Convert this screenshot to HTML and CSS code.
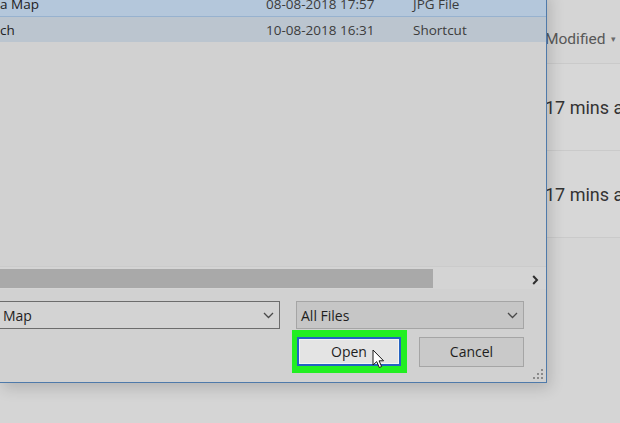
FILE: index.html
```html
<!DOCTYPE html>
<html>
<head>
<meta charset="utf-8">
<link rel="stylesheet" href="styles.css">
</head>
<body>
<div class="screen">
  <div class="explorer">
    <div class="col-header">Modified <span class="caret">▾</span></div>
    <div class="drive-row">17 mins ago</div>
    <div class="drive-row">17 mins ago</div>
  </div>

  <div class="dialog">
    <div class="filelist">
      <div class="file sel">
        <span class="c-name">a Map</span>
        <span class="c-date">08-08-2018 17:57</span>
        <span class="c-type">JPG File</span>
      </div>
      <div class="file hover">
        <span class="c-name">ch</span>
        <span class="c-date">10-08-2018 16:31</span>
        <span class="c-type">Shortcut</span>
      </div>
    </div>
    <div class="hscroll">
      <div class="thumb"></div>
      <svg class="scroll-arrow" width="7" height="10" viewBox="0 0 7 10"><polyline points="1.2,1 5,5 1.2,9" fill="none" stroke="#2e2e2e" stroke-width="2"/></svg>
    </div>
    <div class="fields">
      <div class="combo name"><span>Map</span>
        <svg width="11" height="7" viewBox="0 0 11 7"><polyline points="1,1 5.5,5.5 10,1" fill="none" stroke="#4a4a4a" stroke-width="1.3"/></svg>
      </div>
      <div class="combo type"><span>All Files</span>
        <svg width="11" height="7" viewBox="0 0 11 7"><polyline points="1,1 5.5,5.5 10,1" fill="none" stroke="#4a4a4a" stroke-width="1.3"/></svg>
      </div>
    </div>
    <div class="buttons">
      <div class="ring"><button class="btn primary">Open</button></div>
      <button class="btn cancel">Cancel</button>
    </div>
    <svg class="grip" width="11" height="11" viewBox="0 0 11 11">
      <rect x="8" y="0" width="2" height="2" fill="#8a8a8a"/>
      <rect x="4" y="4" width="2" height="2" fill="#8a8a8a"/>
      <rect x="8" y="4" width="2" height="2" fill="#8a8a8a"/>
      <rect x="0" y="8" width="2" height="2" fill="#8a8a8a"/>
      <rect x="4" y="8" width="2" height="2" fill="#8a8a8a"/>
      <rect x="8" y="8" width="2" height="2" fill="#8a8a8a"/>
    </svg>
  </div>

  <svg class="cursor" width="14" height="20" viewBox="0 0 14 20">
    <path d="M1,1 L1,16 L4.7,12.6 L7.3,18.5 L9.6,17.5 L7.1,11.8 L11.6,11.8 Z" fill="#ffffff" stroke="#1a1a1a" stroke-width="1" stroke-linejoin="round"/>
  </svg>
</div>
</body>
</html>
```
FILE: styles.css
```css
* { box-sizing: border-box; margin: 0; padding: 0; }

body {
  margin: 0;
  width: 620px;
  height: 423px;
  overflow: hidden;
  background: #d5d5d5;
}

.screen {
  position: relative;
  width: 620px;
  height: 423px;
  overflow: hidden;
  background: #d5d5d5;
}

/* background explorer list */
.explorer {
  padding-left: 545px;
  font-family: Roboto, "Liberation Sans", sans-serif;
}

.col-header {
  height: 64px;
  padding-top: 14px;
  display: flex;
  align-items: center;
  font-size: 15.5px;
  color: #585858;
  border-bottom: 1px solid #cacaca;
  white-space: nowrap;
}

.caret {
  font-size: 9px;
  margin-left: 6px;
  color: #6a6a6a;
}

.drive-row {
  height: 87px;
  border-bottom: 1px solid #cacaca;
  display: flex;
  align-items: center;
  font-size: 18px;
  color: #333333;
  white-space: nowrap;
  background: #d7d7d7;
}

/* open file dialog */
.dialog {
  position: absolute;
  left: 0;
  top: -9px;
  width: 547px;
  height: 392px;
  background: #d1d1d1;
  border-right: 1px solid #4f7aaa;
  border-bottom: 1px solid #4f7aaa;
  box-shadow: 3px 5px 14px rgba(0, 0, 0, 0.16);
  display: flex;
  flex-direction: column;
  font-family: "Open Sans", "Noto Sans", sans-serif;
  font-size: 13.5px;
  color: #262626;
}

.filelist {
  height: 275px;
}

.file {
  height: 25px;
  display: flex;
  align-items: center;
  white-space: nowrap;
}

.file.sel {
  height: 26px;
  background: #b4c7db;
  border-bottom: 1px solid #97b2cf;
}

.file.hover {
  background: #bbc5cf;
}

.c-name { width: 266px; padding-left: 0; color: #222; }
.c-date { width: 147px; color: #3c3c3c; }
.c-type { color: #3c3c3c; }

.hscroll {
  height: 23px;
  display: flex;
  align-items: flex-start;
  justify-content: space-between;
  background: #d4d4d4;
  border-top: 1px solid #cbcbcb;
}

.thumb {
  width: 433px;
  height: 19px;
  margin-top: 2px;
  background: #a9a9a9;
}

.scroll-arrow {
  margin-top: 8px;
  margin-right: 7px;
}

.fields {
  display: flex;
  gap: 16px;
  margin-top: 12px;
  height: 28px;
  font-size: 14px;
}

.combo {
  display: flex;
  align-items: center;
  justify-content: space-between;
  border: 1px solid #6c6c6c;
  padding: 0 5px 0 3px;
  color: #1e1e1e;
  white-space: nowrap;
}

.combo.name {
  width: 281px;
  margin-left: -1px;
  background: #d3d3d3;
}

.combo.type {
  width: 228px;
  padding-left: 4px;
  border-color: #a5a5a5;
  background: #c6c6c6;
}

.buttons {
  display: flex;
  justify-content: flex-end;
  align-items: center;
  gap: 12px;
  margin-top: 1px;
  padding-right: 22px;
}

.ring {
  background: #22ef22;
  padding: 7px 6px 7px 5px;
  display: flex;
}

.btn {
  font-family: "Open Sans", "Noto Sans", sans-serif;
  font-size: 14px;
  color: #1e1e1e;
  display: flex;
  align-items: center;
  justify-content: center;
}

.btn.primary {
  width: 104px;
  height: 29px;
  border: 2px solid #2462c2;
  background: #e4e4e4;
  box-shadow: inset 0 0 0 1px #f4f4f4;
}

.btn.cancel {
  width: 105px;
  height: 30px;
  border: 1px solid #a5a5a5;
  background: #c9c9c9;
}

.grip {
  position: absolute;
  right: 2px;
  bottom: 2px;
}

.cursor {
  position: absolute;
  left: 372px;
  top: 349px;
}
```
